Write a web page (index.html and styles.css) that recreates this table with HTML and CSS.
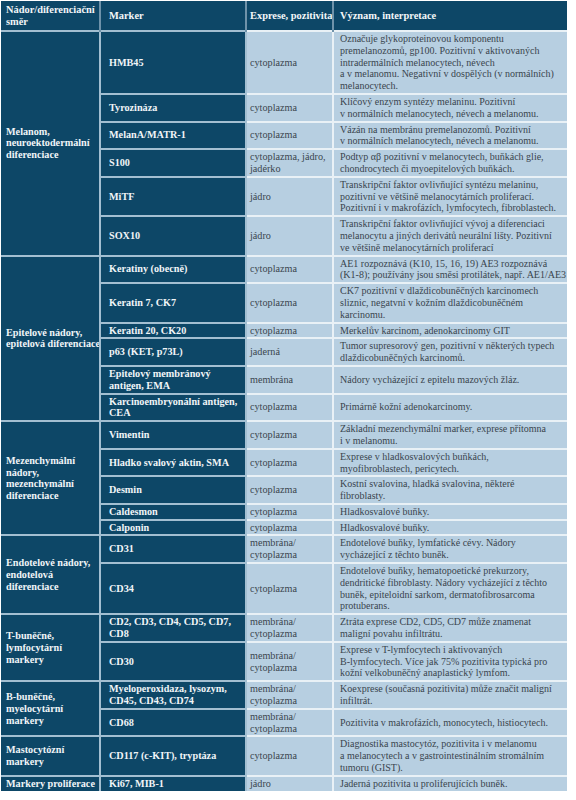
FILE: index.html
```html
<!DOCTYPE html>
<html lang="cs">
<head>
<meta charset="utf-8">
<title>Imunohistochemické markery</title>
<link rel="stylesheet" href="styles.css">
</head>
<body>
<table class="ihc">
  <colgroup>
    <col class="c1"><col class="c2"><col class="c3"><col class="c4">
  </colgroup>
  <thead>
    <tr>
      <th class="g">Nádor/diferenciační<br>směr</th>
      <th class="m">Marker</th>
      <th class="e">Exprese, pozitivita</th>
      <th class="d">Význam, interpretace</th>
    </tr>
  </thead>
  <tbody class="grp">
    <tr>
      <td class="g" rowspan="6">Melanom,<br>neuroektodermální<br>diferenciace</td>
      <td class="m">HMB45</td>
      <td class="e">cytoplazma</td>
      <td class="d">Označuje glykoproteinovou komponentu<br>premelanozomů, gp100. Pozitivní v aktivovaných<br>intradermálních melanocytech, névech<br>a v melanomu. Negativní v dospělých (v normálních)<br>melanocytech.</td>
    </tr>
    <tr>
      <td class="m">Tyrozináza</td>
      <td class="e">cytoplazma</td>
      <td class="d">Klíčový enzym syntézy melaninu. Pozitivní<br>v normálních melanocytech, névech a melanomu.</td>
    </tr>
    <tr>
      <td class="m">MelanA/MATR-1</td>
      <td class="e">cytoplazma</td>
      <td class="d">Vázán na membránu premelanozomů. Pozitivní<br>v normálních melanocytech, névech a melanomu.</td>
    </tr>
    <tr>
      <td class="m">S100</td>
      <td class="e">cytoplazma, jádro,<br>jadérko</td>
      <td class="d">Podtyp αβ pozitivní v melanocytech, buňkách glie,<br>chondrocytech či myoepitelových buňkách.</td>
    </tr>
    <tr>
      <td class="m">MiTF</td>
      <td class="e">jádro</td>
      <td class="d">Transkripční faktor ovlivňující syntézu melaninu,<br>pozitivní ve většině melanocytárních proliferací.<br>Pozitivní i v makrofázích, lymfocytech, fibroblastech.</td>
    </tr>
    <tr>
      <td class="m">SOX10</td>
      <td class="e">jádro</td>
      <td class="d">Transkripční faktor ovlivňující vývoj a diferenciaci<br>melanocytu a jiných derivátů neurální lišty. Pozitivní<br>ve většině melanocytárních proliferací</td>
    </tr>
  </tbody>
  <tbody class="grp">
    <tr>
      <td class="g" rowspan="6">Epitelové nádory,<br>epitelová diferenciace</td>
      <td class="m">Keratiny (obecně)</td>
      <td class="e">cytoplazma</td>
      <td class="d">AE1 rozpoznává (K10, 15, 16, 19) AE3 rozpoznává<br>(K1-8); používány jsou směsi protilátek, např. AE1/AE3</td>
    </tr>
    <tr>
      <td class="m">Keratin 7, CK7</td>
      <td class="e">cytoplazma</td>
      <td class="d">CK7 pozitivní v dlaždicobuněčných karcinomech<br>sliznic, negatvní v kožním dlaždicobuněčném<br>karcinomu.</td>
    </tr>
    <tr>
      <td class="m">Keratin 20, CK20</td>
      <td class="e">cytoplazma</td>
      <td class="d">Merkelův karcinom, adenokarcinomy GIT</td>
    </tr>
    <tr>
      <td class="m">p63 (KET, p73L)</td>
      <td class="e">jaderná</td>
      <td class="d">Tumor supresorový gen, pozitivní v některých typech<br>dlaždicobuněčných karcinomů.</td>
    </tr>
    <tr>
      <td class="m">Epitelový membránový<br>antigen, EMA</td>
      <td class="e">membrána</td>
      <td class="d">Nádory vycházející z epitelu mazových žláz.</td>
    </tr>
    <tr>
      <td class="m">Karcinoembryonální antigen,<br>CEA</td>
      <td class="e">cytoplazma</td>
      <td class="d">Primárně kožní adenokarcinomy.</td>
    </tr>
  </tbody>
  <tbody class="grp">
    <tr>
      <td class="g" rowspan="5">Mezenchymální<br>nádory,<br>mezenchymální<br>diferenciace</td>
      <td class="m">Vimentin</td>
      <td class="e">cytoplazma</td>
      <td class="d">Základní mezenchymální marker, exprese přítomna<br>i v melanomu.</td>
    </tr>
    <tr>
      <td class="m">Hladko svalový aktin, SMA</td>
      <td class="e">cytoplazma</td>
      <td class="d">Exprese v hladkosvalových buňkách,<br>myofibroblastech, pericytech.</td>
    </tr>
    <tr>
      <td class="m">Desmin</td>
      <td class="e">cytoplazma</td>
      <td class="d">Kostní svalovina, hladká svalovina, některé<br>fibroblasty.</td>
    </tr>
    <tr>
      <td class="m">Caldesmon</td>
      <td class="e">cytoplazma</td>
      <td class="d">Hladkosvalové buňky.</td>
    </tr>
    <tr>
      <td class="m">Calponin</td>
      <td class="e">cytoplazma</td>
      <td class="d">Hladkosvalové buňky.</td>
    </tr>
  </tbody>
  <tbody class="grp">
    <tr>
      <td class="g" rowspan="2">Endotelové nádory,<br>endotelová<br>diferenciace</td>
      <td class="m">CD31</td>
      <td class="e">membrána/<br>cytoplazma</td>
      <td class="d">Endotelové buňky, lymfatické cévy. Nádory<br>vycházející z těchto buněk.</td>
    </tr>
    <tr>
      <td class="m">CD34</td>
      <td class="e">cytoplazma</td>
      <td class="d">Endotelové buňky, hematopoetické prekurzory,<br>dendritické fibroblasty. Nádory vycházející z těchto<br>buněk, epiteloidní sarkom, dermatofibrosarcoma<br>protuberans.</td>
    </tr>
  </tbody>
  <tbody class="grp">
    <tr>
      <td class="g" rowspan="2">T-buněčné,<br>lymfocytární<br>markery</td>
      <td class="m">CD2, CD3, CD4, CD5, CD7,<br>CD8</td>
      <td class="e">membrána/<br>cytoplazma</td>
      <td class="d">Ztráta exprese CD2, CD5, CD7 může znamenat<br>maligní povahu infiltrátu.</td>
    </tr>
    <tr>
      <td class="m">CD30</td>
      <td class="e">membrána/<br>cytoplazma</td>
      <td class="d">Exprese v T-lymfocytech i aktivovaných<br>B-lymfocytech. Více jak 75% pozitivita typická pro<br>kožní velkobuněčný anaplastický lymfom.</td>
    </tr>
  </tbody>
  <tbody class="grp">
    <tr>
      <td class="g" rowspan="2">B-buněčné,<br>myelocytární<br>markery</td>
      <td class="m">Myeloperoxidaza, lysozym,<br>CD45, CD43, CD74</td>
      <td class="e">membrána/<br>cytoplazma</td>
      <td class="d">Koexprese (současná pozitivita) může značit maligní<br>infiltrát.</td>
    </tr>
    <tr>
      <td class="m">CD68</td>
      <td class="e">membrána/<br>cytoplazma</td>
      <td class="d">Pozitivita v makrofázích, monocytech, histiocytech.</td>
    </tr>
  </tbody>
  <tbody class="grp">
    <tr>
      <td class="g">Mastocytózní<br>markery</td>
      <td class="m">CD117 (c-KIT), tryptáza</td>
      <td class="e">cytoplazma</td>
      <td class="d">Diagnostika mastocytóz, pozitivita i v melanomu<br>a melanocytech a v gastrointestinálním stromálním<br>tumoru (GIST).</td>
    </tr>
  </tbody>
  <tbody class="grp">
    <tr>
      <td class="g">Markery proliferace</td>
      <td class="m">Ki67, MIB-1</td>
      <td class="e">jádro</td>
      <td class="d">Jaderná pozitivita u proliferujících buněk.</td>
    </tr>
  </tbody>
</table>
</body>
</html>
```

FILE: styles.css
```css
html, body {
  margin: 0;
  padding: 0;
  background: #ffffff;
}

body {
  font-family: "Liberation Serif", "Times New Roman", serif;
}

.ihc {
  margin: 1px 0 0 1px;
  width: 566px;
  table-layout: fixed;
  border-collapse: collapse;
  font-family: "Liberation Serif", "Times New Roman", serif;
  font-size: 10.2px;
  line-height: 11.8px;
}

.c1 { width: 99px; }
.c2 { width: 146px; }
.c3 { width: 87px; }
.c4 { width: 234px; }

.ihc th,
.ihc td {
  padding: 1px 4px;
  vertical-align: middle;
  text-align: left;
  white-space: nowrap;
  overflow: hidden;
}

.ihc .g { padding-left: 5px; padding-right: 1px; }
.ihc .m { padding-left: 8px; padding-right: 2px; }
.ihc .e { padding-left: 3px; padding-right: 1px; }
.ihc .d { padding-left: 6px; padding-right: 1px; }

.ihc td.d {
  font-size: 10px;
}

.ihc th {
  background: #0d4767;
  color: #f3f6f8;
  font-weight: bold;
  font-size: 10.4px;
  height: 27px;
  border-left: 2px solid #6f93aa;
}

.ihc th:first-child {
  border-left: 0;
}

.ihc td {
  border: 2px solid #e9f1f6;
}

.ihc td.g,
.ihc td.m {
  background: #0d4767;
  color: #f1f5f8;
  font-weight: bold;
  border-color: #a3bfd1;
}

.ihc td.g {
  border-left: 0;
}

.ihc td.e,
.ihc td.d {
  background: #b7cfe1;
  color: #3a454e;
}

.ihc td.e {
  border-left-color: #0d4767;
}

.ihc td.d {
  border-right: 0;
}

.grp:last-child tr:last-child td {
  border-bottom: 0;
}
```
